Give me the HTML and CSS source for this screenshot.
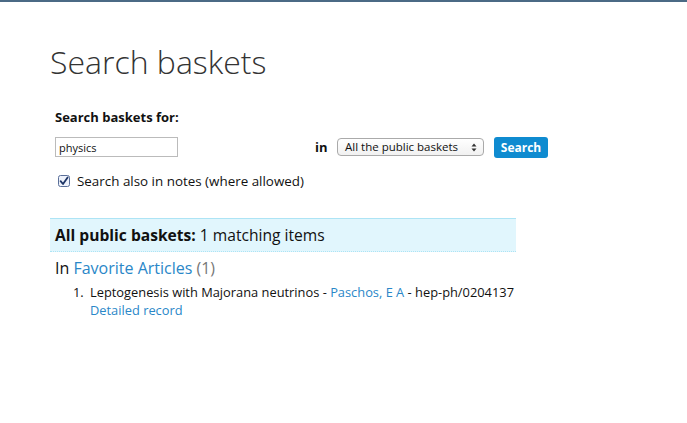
FILE: index.html
```html
<!DOCTYPE html>
<html>
<head>
<meta charset="utf-8">
<link rel="stylesheet" href="styles.css">
</head>
<body>
<div class="topbar"></div>
<main class="page">
  <h1 class="title">Search baskets</h1>
  <form class="search">
    <div class="label">Search baskets for:</div>
    <div class="row">
      <input class="query" type="text" value="physics">
      <span class="in">in</span>
      <div class="select">All the public baskets<span class="arrows"><svg width="6" height="9" viewBox="0 0 6 9"><path d="M3 0.5 L5.5 3.5 H0.5 Z M3 8.5 L5.5 5.5 H0.5 Z" fill="#333"/></svg></span></div>
      <button class="btn" type="button">Search</button>
    </div>
    <label class="check"><span class="box"><svg width="12" height="12" viewBox="0 0 12 12"><rect x="0.5" y="0.5" width="11" height="11" rx="2" fill="#eef2fb" stroke="#5a6f99"/><path d="M2.6 6.2 L5 9 L9.6 2.4" fill="none" stroke="#1d3566" stroke-width="1.8" stroke-linecap="round" stroke-linejoin="round"/></svg></span>Search also in notes (where allowed)</label>
  </form>
  <section class="results">
    <div class="header"><b>All public baskets:</b> 1 matching items</div>
    <div class="basket">In <a href="#" class="link">Favorite Articles</a> <span class="count">(1)</span></div>
    <ol class="items">
      <li><span class="num">1.</span><div>Leptogenesis with Majorana neutrinos - <a href="#" class="link">Paschos, E A</a> - hep-ph/0204137<br><a href="#" class="link">Detailed record</a></div></li>
    </ol>
  </section>
</main>
</body>
</html>
```

FILE: styles.css
```css
html, body { margin: 0; padding: 0; background: #fff; }
body { font-family: "Open Sans", "DejaVu Sans", sans-serif; color: #111; }
.topbar { height: 2px; background: #4b6a85; }
.page { padding-left: 50px; }
.title { font-weight: 300; font-size: 32px; margin: 0; padding-top: 36px; line-height: 48px; color: #333; }
.search { padding-left: 5px; margin-top: 22px; }
.label { font-size: 13px; font-weight: 700; line-height: 18px; }
.row { display: flex; align-items: center; margin-top: 10px; height: 22px; }
.query { box-sizing: border-box; width: 123px; height: 20px; margin: 0; border: 1px solid #bbb; padding: 2px 3px; font-family: "Open Sans", sans-serif; font-size: 11px; color: #111; outline: none; }
.in { font-size: 13px; font-weight: 700; margin-left: 137px; width: 22px; }
.select { box-sizing: border-box; width: 147px; height: 18px; border: 1px solid #aaa; border-radius: 4px; background: linear-gradient(#fff, #f1f1f1); font-size: 11.5px; line-height: 16px; padding-left: 7px; display: flex; justify-content: space-between; align-items: center; color: #111; }
.arrows { display: flex; align-items: center; padding-right: 6px; }
.btn { margin-left: 10px; box-sizing: border-box; width: 54px; height: 21px; background: #0f8bd0; border: none; border-radius: 3px; color: #fff; font-family: "Open Sans", sans-serif; font-weight: 700; font-size: 12px; padding: 0; }
.check { display: flex; align-items: center; font-size: 13.4px; margin-top: 14px; margin-left: 3px; line-height: 18px; }
.box { display: inline-flex; margin-right: 7px; }
.results { margin-top: 28px; width: 466px; }
.header { background: #e1f6fd; border-top: 1px solid #ade4f5; border-bottom: 1px dotted #ade4f5; font-size: 15.6px; padding: 0 5px; line-height: 32px; white-space: nowrap; }
.header b { font-weight: 700; }
.basket { font-size: 16px; padding-left: 5px; margin-top: 5px; line-height: 22px; white-space: nowrap; }
.link { color: #2a87c8; text-decoration: none; }
.count { color: #777; }
.items { list-style: none; margin: 4px 0 0 0; padding: 0 0 0 23px; font-size: 12.85px; line-height: 18px; white-space: nowrap; }
.items li { display: flex; }
.num { width: 17px; flex-shrink: 0; }
```
